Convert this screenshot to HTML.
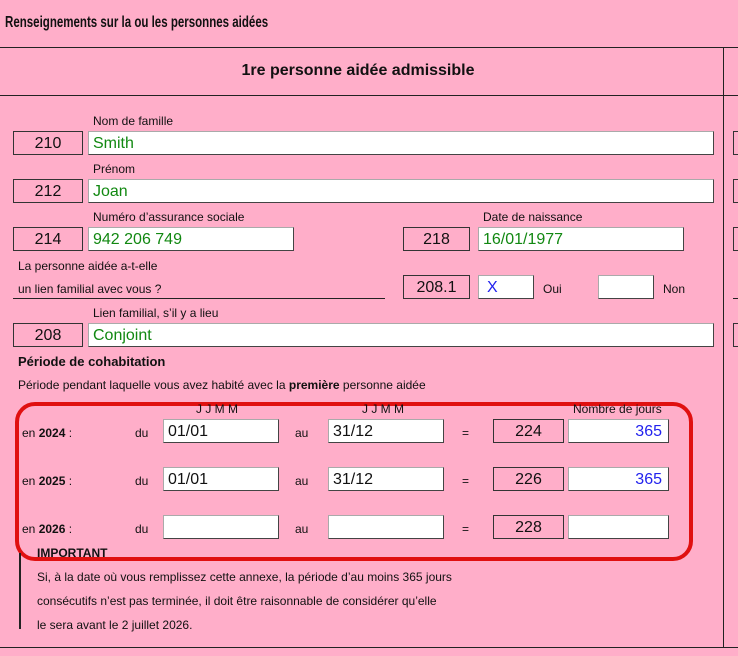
<!DOCTYPE html>
<html><head><meta charset="utf-8"><style>
*{margin:0;padding:0;box-sizing:border-box}
body{width:738px;height:656px;background:#ffaec9;font-family:"Liberation Sans",Arial,sans-serif;position:relative;overflow:hidden;color:#111}
.a{position:absolute;white-space:nowrap}
.hl{position:absolute;height:1px;background:#222}
.vl{position:absolute;width:1px;background:#222}
.code{position:absolute;border:1px solid #333;height:24px;font-size:16px;text-align:center;line-height:23px}
.f{position:absolute;background:#fff;height:24px;border:1px solid #444;border-top-color:#aaa;border-left-color:#aaa;font-size:16px;line-height:23px;padding-left:4px}
.g{color:#118811}
.b{color:#2222ee}
.l{font-size:12px}
</style></head><body>
<div class="a" style="left:5px;top:14px;font-size:16px;font-weight:bold;transform:scaleX(.72);transform-origin:left">Renseignements sur la ou les personnes aidées</div>
<div class="hl" style="left:0;top:47px;width:738px"></div>
<div class="hl" style="left:0;top:95px;width:738px"></div>
<div class="hl" style="left:0;top:647px;width:738px"></div>
<div class="vl" style="left:723px;top:47px;height:600px"></div>
<div class="a" style="left:0;width:716px;text-align:center;top:62px;font-size:16px;font-weight:bold">1re personne aidée admissible</div>

<div class="a l" style="left:93px;top:114px">Nom de famille</div>
<div class="code" style="left:13px;top:131px;width:70px">210</div>
<div class="f g" style="left:88px;top:131px;width:626px">Smith</div>

<div class="a l" style="left:93px;top:162px">Prénom</div>
<div class="code" style="left:13px;top:179px;width:70px">212</div>
<div class="f g" style="left:88px;top:179px;width:626px">Joan</div>

<div class="a l" style="left:93px;top:210px">Numéro d’assurance sociale</div>
<div class="a l" style="left:483px;top:210px">Date de naissance</div>
<div class="code" style="left:13px;top:227px;width:70px">214</div>
<div class="f g" style="left:88px;top:227px;width:206px">942 206 749</div>
<div class="code" style="left:403px;top:227px;width:67px">218</div>
<div class="f g" style="left:478px;top:227px;width:206px">16/01/1977</div>

<div class="a l" style="left:18px;top:259px">La personne aidée a-t-elle</div>
<div class="a l" style="left:18px;top:282px">un lien familial avec vous ?</div>
<div class="hl" style="left:13px;top:298px;width:372px"></div>
<div class="code" style="left:403px;top:275px;width:67px">208.1</div>
<div class="f b" style="left:478px;top:275px;width:56px;padding-left:8px">X</div>
<div class="a l" style="left:543px;top:282px">Oui</div>
<div class="f" style="left:598px;top:275px;width:56px"></div>
<div class="a l" style="left:663px;top:282px">Non</div>

<div class="a l" style="left:93px;top:306px">Lien familial, s’il y a lieu</div>
<div class="code" style="left:13px;top:323px;width:70px">208</div>
<div class="f g" style="left:88px;top:323px;width:626px">Conjoint</div>

<div class="a" style="left:18px;top:354px;font-size:13px;font-weight:bold">Période de cohabitation</div>
<div class="a l" style="left:18px;top:378px">Période pendant laquelle vous avez habité avec la <b>première</b> personne aidée</div>

<div class="a" style="left:15px;top:402px;width:678px;height:159px;border:4px solid #e01010;border-radius:20px"></div>
<div class="a l" style="left:196px;top:402px">J J M M</div>
<div class="a l" style="left:362px;top:402px">J J M M</div>
<div class="a l" style="left:573px;top:402px">Nombre de jours</div>

<div class="a l" style="left:22px;top:426px">en <b>2024</b> :</div>
<div class="a l" style="left:135px;top:426px">du</div>
<div class="f" style="left:163px;top:419px;width:116px">01/01</div>
<div class="a l" style="left:295px;top:426px">au</div>
<div class="f" style="left:328px;top:419px;width:116px">31/12</div>
<div class="a l" style="left:462px;top:426px">=</div>
<div class="code" style="left:493px;top:419px;width:71px">224</div>
<div class="f b" style="left:568px;top:419px;width:101px;text-align:right;padding-right:6px">365</div>

<div class="a l" style="left:22px;top:474px">en <b>2025</b> :</div>
<div class="a l" style="left:135px;top:474px">du</div>
<div class="f" style="left:163px;top:467px;width:116px">01/01</div>
<div class="a l" style="left:295px;top:474px">au</div>
<div class="f" style="left:328px;top:467px;width:116px">31/12</div>
<div class="a l" style="left:462px;top:474px">=</div>
<div class="code" style="left:493px;top:467px;width:71px">226</div>
<div class="f b" style="left:568px;top:467px;width:101px;text-align:right;padding-right:6px">365</div>

<div class="a l" style="left:22px;top:522px">en <b>2026</b> :</div>
<div class="a l" style="left:135px;top:522px">du</div>
<div class="f" style="left:163px;top:515px;width:116px"></div>
<div class="a l" style="left:295px;top:522px">au</div>
<div class="f" style="left:328px;top:515px;width:116px"></div>
<div class="a l" style="left:462px;top:522px">=</div>
<div class="code" style="left:493px;top:515px;width:71px">228</div>
<div class="f" style="left:568px;top:515px;width:101px"></div>

<div class="vl" style="left:19px;top:553px;height:76px;width:2px"></div>
<div class="a" style="left:37px;top:546px;font-size:12px;font-weight:bold">IMPORTANT</div>
<div class="a l" style="left:37px;top:570px">Si, à la date où vous remplissez cette annexe, la période d’au moins 365 jours</div>
<div class="a l" style="left:37px;top:594px">consécutifs n’est pas terminée, il doit être raisonnable de considérer qu’elle</div>
<div class="a l" style="left:37px;top:618px">le sera avant le 2 juillet 2026.</div>

<div class="code" style="left:733px;top:131px;width:20px"></div>
<div class="code" style="left:733px;top:179px;width:20px"></div>
<div class="code" style="left:733px;top:227px;width:20px"></div>
<div class="hl" style="left:733px;top:298px;width:10px"></div>
<div class="code" style="left:733px;top:323px;width:20px"></div>
</body></html>
